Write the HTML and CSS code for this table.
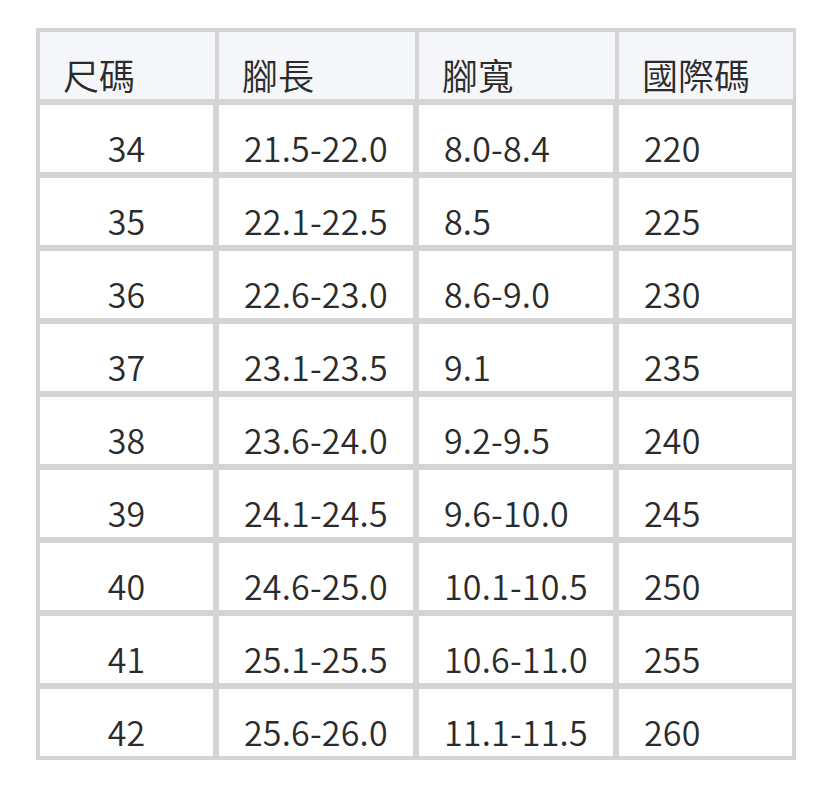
FILE: index.html
```html
<!DOCTYPE html>
<html lang="zh-Hant">
<head>
<meta charset="utf-8">
<title>尺碼表</title>
<link rel="stylesheet" href="styles.css">
</head>
<body>
<div class="size-table">
  <div class="cell head">尺碼</div>
  <div class="cell head">腳長</div>
  <div class="cell head">腳寬</div>
  <div class="cell head">國際碼</div>

  <div class="cell body center">34</div><div class="cell body">21.5-22.0</div><div class="cell body">8.0-8.4</div><div class="cell body last">220</div>
  <div class="cell body center">35</div><div class="cell body">22.1-22.5</div><div class="cell body">8.5</div><div class="cell body last">225</div>
  <div class="cell body center">36</div><div class="cell body">22.6-23.0</div><div class="cell body">8.6-9.0</div><div class="cell body last">230</div>
  <div class="cell body center">37</div><div class="cell body">23.1-23.5</div><div class="cell body">9.1</div><div class="cell body last">235</div>
  <div class="cell body center">38</div><div class="cell body">23.6-24.0</div><div class="cell body">9.2-9.5</div><div class="cell body last">240</div>
  <div class="cell body center">39</div><div class="cell body">24.1-24.5</div><div class="cell body">9.6-10.0</div><div class="cell body last">245</div>
  <div class="cell body center">40</div><div class="cell body">24.6-25.0</div><div class="cell body">10.1-10.5</div><div class="cell body last">250</div>
  <div class="cell body center">41</div><div class="cell body">25.1-25.5</div><div class="cell body">10.6-11.0</div><div class="cell body last">255</div>
  <div class="cell body center">42</div><div class="cell body">25.6-26.0</div><div class="cell body">11.1-11.5</div><div class="cell body last">260</div>
</div>
</body>
</html>
```

FILE: styles.css
```css
html, body {
  margin: 0;
  padding: 0;
  background: #ffffff;
}

body {
  font-family: "Noto Sans CJK TC", "Noto Sans", sans-serif;
  font-weight: 350;
  color: #2b2b2b;
}

.size-table {
  margin: 28px 0 0 36px;
  width: 760px;
  box-sizing: border-box;
  display: grid;
  grid-template-columns: 175px 196px 196px 174px;
  grid-auto-rows: 67px;
  column-gap: 4px;
  row-gap: 6px;
  padding: 4px 3px 4px 4px;
  background: #d4d4d4;
}

.cell {
  box-sizing: border-box;
  line-height: 48px;
  white-space: nowrap;
}

.head {
  background: #f5f6fa;
  font-size: 36px;
  padding: 18px 0 0 23px;
}

.body {
  background: #ffffff;
  border-right: 2px solid #d4d4d4;
  font-size: 34px;
  letter-spacing: 0.2px;
  padding: 19px 0 0 25px;
}

.body.last {
  border-right-width: 1px;
}

.center {
  text-align: center;
  padding-left: 0;
}
```
